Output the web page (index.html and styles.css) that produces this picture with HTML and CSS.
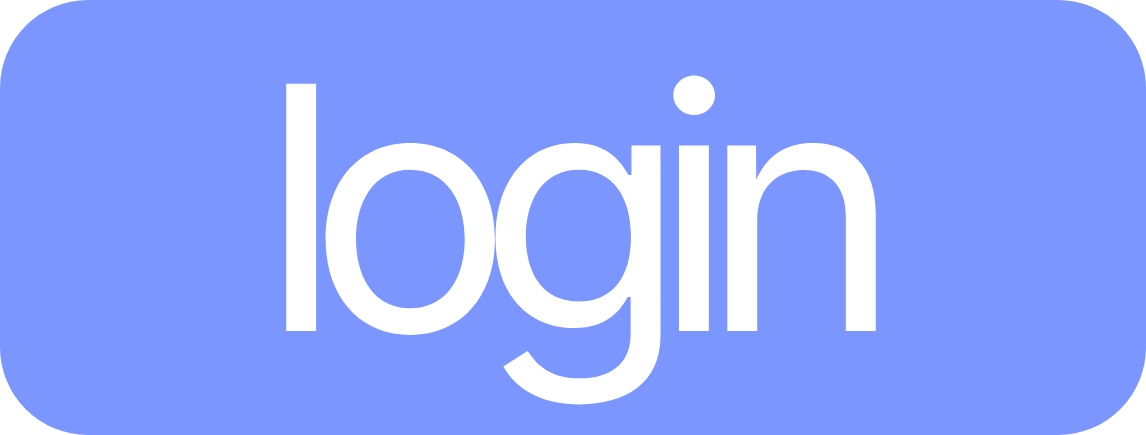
FILE: index.html
```html
<!DOCTYPE html>
<html>
<head>
<meta charset="utf-8">
<link rel="stylesheet" href="styles.css">
</head>
<body>
<button class="login-btn">login</button>
</body>
</html>
```
FILE: styles.css
```css
html, body {
  margin: 0;
  padding: 0;
  background: #ffffff;
}
.login-btn {
  display: flex;
  align-items: center;
  justify-content: center;
  width: 1146px;
  height: 435px;
  margin: 0;
  padding: 0 18px 20px 0;
  border: none;
  border-radius: 88px;
  background: #7b97ff;
  color: #ffffff;
  font-family: Inter, "Noto Sans", sans-serif;
  font-size: 340px;
  font-weight: 400;
  letter-spacing: -34px;
  line-height: 1;
  cursor: pointer;
}
```
